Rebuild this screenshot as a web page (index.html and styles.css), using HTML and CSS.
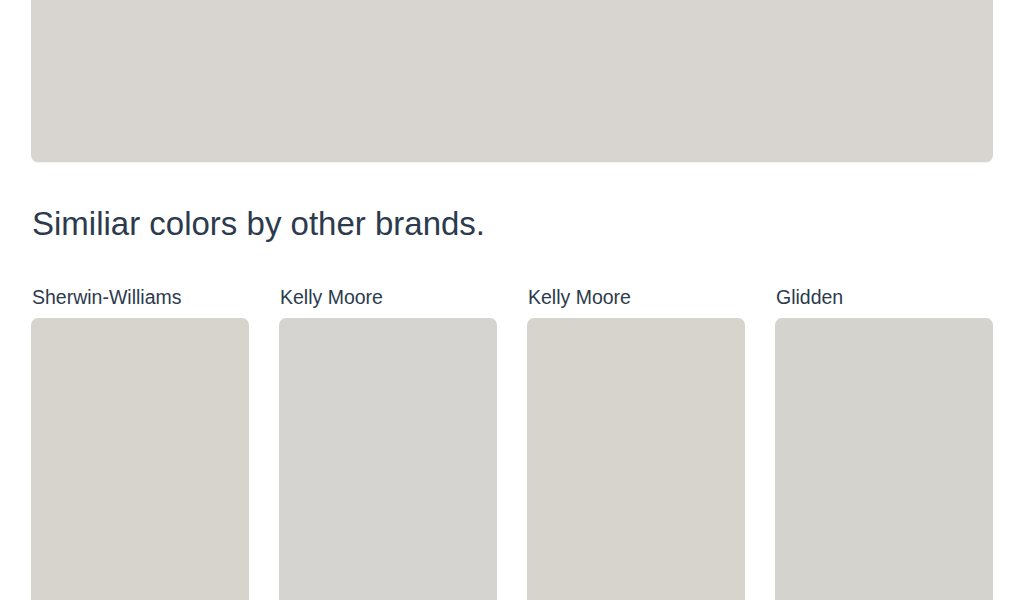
FILE: index.html
```html
<!DOCTYPE html>
<html lang="en">
<head>
<meta charset="utf-8">
<title>Similar colors</title>
<link rel="stylesheet" href="styles.css">
</head>
<body>
<main class="page">
  <div class="hero-swatch"></div>
  <h2 class="section-title">Similiar colors by other brands.</h2>
  <div class="brand-grid">
    <div class="brand">
      <div class="brand-name">Sherwin-Williams</div>
      <div class="swatch swatch-sw"></div>
    </div>
    <div class="brand">
      <div class="brand-name">Kelly Moore</div>
      <div class="swatch swatch-km1"></div>
    </div>
    <div class="brand">
      <div class="brand-name">Kelly Moore</div>
      <div class="swatch swatch-km2"></div>
    </div>
    <div class="brand">
      <div class="brand-name">Glidden</div>
      <div class="swatch swatch-gl"></div>
    </div>
  </div>
</main>
</body>
</html>
```
FILE: styles.css
```css
html, body {
  margin: 0;
  padding: 0;
  background: #ffffff;
  overflow: hidden;
}
body {
  font-family: "Liberation Sans", Arial, Helvetica, sans-serif;
  color: #2c3a4d;
}
.page {
  width: 962px;
  padding: 0 31px;
}
.hero-swatch {
  height: 162px;
  background: #d8d4cf;
  border-radius: 0 0 7px 7px;
  box-shadow: 0 1px 1px rgba(0,0,0,0.06);
}
.section-title {
  margin: 41px 0 0 1px;
  font-size: 33px;
  font-weight: normal;
  line-height: 42px;
  letter-spacing: 0;
}
.brand-grid {
  display: grid;
  grid-template-columns: repeat(4, 1fr);
  column-gap: 30px;
  margin-top: 41px;
}
.brand-name {
  font-size: 19.5px;
  line-height: 22px;
  margin-left: 1px;
  margin-bottom: 10px;
}
.swatch {
  height: 320px;
  border-radius: 7px;
}
.swatch-sw { background: #d7d4ce; }
.swatch-km1 { background: #d5d4d0; }
.swatch-km2 { background: #d7d4ce; }
.swatch-gl { background: #d4d3ce; }
```
